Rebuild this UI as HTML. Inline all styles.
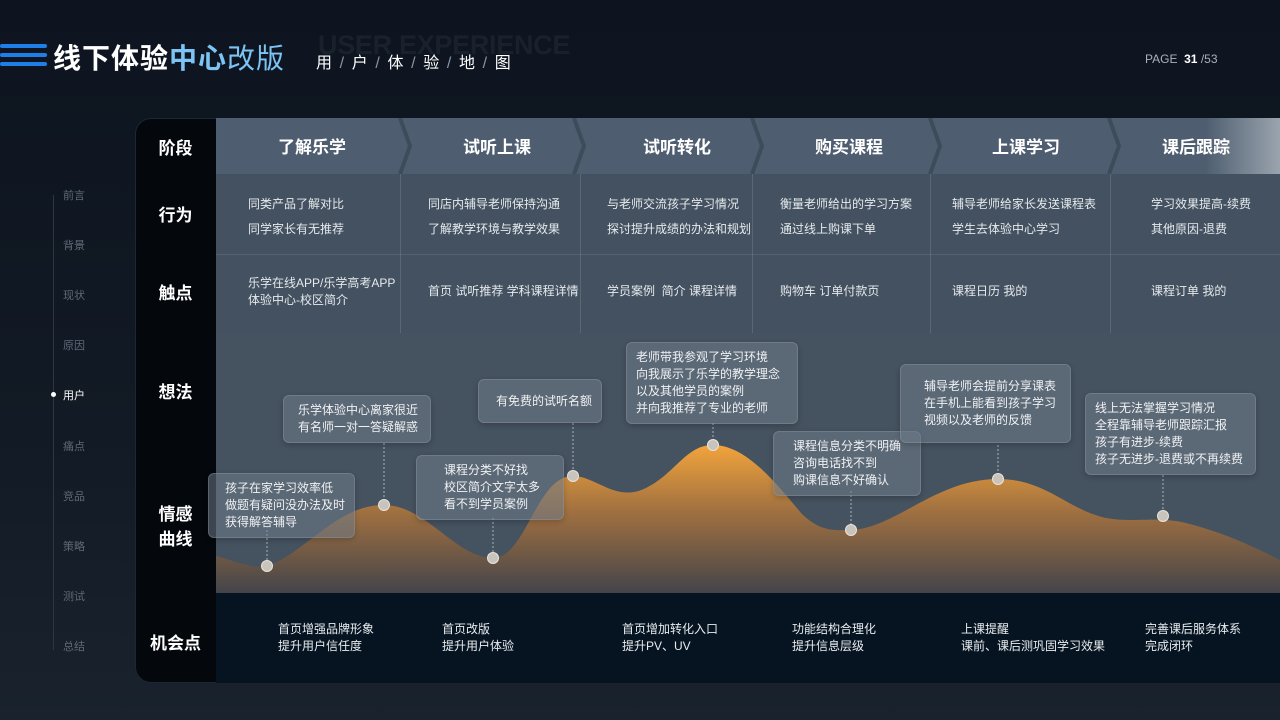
<!DOCTYPE html>
<html><head><meta charset="utf-8"><style>
*{margin:0;padding:0;box-sizing:border-box}
body{width:1280px;height:720px;overflow:hidden;background:linear-gradient(180deg,#0d141f 0%,#121a25 60%,#19222d 100%);font-family:"Liberation Sans","Noto Sans CJK SC",sans-serif;color:#fff;position:relative}
.a{position:absolute}
.t{font-size:12px;line-height:25px;color:#e6eaee;white-space:nowrap}
.lab{font-size:17px;font-weight:bold;color:#fff;text-align:center;width:81px;left:135px}
.bub{position:absolute;background:rgba(110,122,136,.55);border:1px solid rgba(150,160,170,.35);border-radius:6px;font-size:12px;line-height:17px;color:#f0f2f4;padding:6px 14px;white-space:nowrap;box-shadow:0 2px 6px rgba(0,0,0,.2)}
.nav{left:63px;font-size:11px;color:#5f6a76}
.op{font-size:12px;line-height:17px;color:#e8ecef;top:621px}
.vl{position:absolute;width:1px;background:rgba(160,170,180,.25)}
</style></head><body>
<div class="a" style="left:0;top:44px;width:47px;height:4px;background:#1e7fe8;border-radius:2px"></div>
<div class="a" style="left:0;top:53px;width:47px;height:4px;background:#1e7fe8;border-radius:2px"></div>
<div class="a" style="left:0;top:62px;width:47px;height:4px;background:#1e7fe8;border-radius:2px"></div>
<div class="a" style="left:53px;top:37px;font-size:28px;font-weight:bold;white-space:nowrap;letter-spacing:1px">线下体验<span style="color:#7cc4f4">中心</span><span style="color:#7cc4f4;font-weight:normal">改版</span></div>
<div class="a" style="left:318px;top:30px;font-size:27px;font-weight:bold;color:#18212c;white-space:nowrap;letter-spacing:-0.3px">USER EXPERIENCE</div>
<div class="a" style="left:316px;top:49px;font-size:16px;white-space:nowrap;letter-spacing:1.6px">用 <span style="color:#8a95a0">/</span> 户 <span style="color:#8a95a0">/</span> 体 <span style="color:#8a95a0">/</span> 验 <span style="color:#8a95a0">/</span> 地 <span style="color:#8a95a0">/</span> 图</div>
<div class="a" style="left:1145px;top:52px;font-size:12px;color:#a9b1ba;white-space:nowrap">PAGE&nbsp; <b style="color:#fff">31</b> /53</div>

<div class="a" style="left:53px;top:195px;width:1px;height:455px;background:#2c3743"></div>
<div class="a" style="left:51px;top:392px;width:5px;height:5px;border-radius:50%;background:#fff"></div>
<div class="a nav" style="top:187px">前言</div><div class="a nav" style="top:237px">背景</div><div class="a nav" style="top:287px">现状</div><div class="a nav" style="top:337px">原因</div><div class="a nav" style="top:387px;color:#fff">用户</div><div class="a nav" style="top:438px">痛点</div><div class="a nav" style="top:488px">竞品</div><div class="a nav" style="top:538px">策略</div><div class="a nav" style="top:588px">测试</div><div class="a nav" style="top:638px">总结</div>

<div class="a" style="left:135px;top:118px;width:1145px;height:565px;border-radius:16px 0 0 16px;background:#04080d;overflow:hidden;border:1px solid #1a2836;border-right:none"></div>
<div class="a" style="left:216px;top:118px;width:1064px;height:56px;background:linear-gradient(90deg,#4e5e70 0%,#4e5e70 93%,#9aa4ae 100%)"></div>
<svg class="a" style="left:216px;top:118px" width="1064" height="56">
<g fill="none" stroke="#3d4b5a" stroke-width="4">
<polyline points="184,0 194,28 184,56"/><polyline points="358,0 368,28 358,56"/><polyline points="536,0 546,28 536,56"/><polyline points="714,0 724,28 714,56"/><polyline points="893,0 903,28 893,56"/></g></svg>
<div class="a" style="left:216px;top:174px;width:1064px;height:159px;background:#435160"></div>
<div class="a" style="left:216px;top:254px;width:1064px;height:1px;background:#55636f"></div>
<div class="a" style="left:216px;top:333px;width:1064px;height:260px;background:#45525f"></div>
<div class="vl" style="left:400px;top:174px;height:159px"></div><div class="vl" style="left:580px;top:174px;height:159px"></div><div class="vl" style="left:752px;top:174px;height:159px"></div><div class="vl" style="left:930px;top:174px;height:159px"></div><div class="vl" style="left:1110px;top:174px;height:159px"></div>
<div class="a" style="left:216px;top:593px;width:1064px;height:90px;background:#061421"></div>

<div class="a lab" style="top:134px">阶段</div>
<div class="a lab" style="top:201px">行为</div>
<div class="a lab" style="top:279px">触点</div>
<div class="a lab" style="top:378px">想法</div>
<div class="a lab" style="top:502px;line-height:25px">情感<br>曲线</div>
<div class="a lab" style="top:629px">机会点</div>

<div class="a" style="top:133px;left:216px;width:1064px;height:22px;font-size:17px;font-weight:bold">
<span class="a" style="left:62px">了解乐学</span><span class="a" style="left:247px">试听上课</span><span class="a" style="left:427px">试听转化</span><span class="a" style="left:599px">购买课程</span><span class="a" style="left:776px">上课学习</span><span class="a" style="left:946px">课后跟踪</span></div>

<div class="a t" style="left:248px;top:192px">同类产品了解对比<br>同学家长有无推荐</div>
<div class="a t" style="left:428px;top:192px">同店内辅导老师保持沟通<br>了解教学环境与教学效果</div>
<div class="a t" style="left:607px;top:192px">与老师交流孩子学习情况<br>探讨提升成绩的办法和规划</div>
<div class="a t" style="left:780px;top:192px">衡量老师给出的学习方案<br>通过线上购课下单</div>
<div class="a t" style="left:952px;top:192px">辅导老师给家长发送课程表<br>学生去体验中心学习</div>
<div class="a t" style="left:1151px;top:192px">学习效果提高-续费<br>其他原因-退费</div>
<div class="a t" style="left:248px;top:275px;line-height:17px">乐学在线APP/乐学高考APP<br>体验中心-校区简介</div>
<div class="a t" style="left:428px;top:279px">首页 试听推荐 学科课程详情</div>
<div class="a t" style="left:607px;top:279px">学员案例&nbsp; 简介 课程详情</div>
<div class="a t" style="left:780px;top:279px">购物车 订单付款页</div>
<div class="a t" style="left:952px;top:279px">课程日历 我的</div>
<div class="a t" style="left:1151px;top:279px">课程订单 我的</div>

<svg class="a" style="left:216px;top:333px" width="1064" height="260">
<defs><linearGradient id="g" x1="0" y1="0" x2="0" y2="1"><stop offset="0" stop-color="#f2a43c"/><stop offset=".45" stop-color="#a07040"/><stop offset="1" stop-color="#44444a"/></linearGradient></defs>
<path d="M0,223 C20,228 35,236 51,233 C90,220 120,172 168,172 C210,172 240,225 277,225 C310,225 320,143 357,143 C380,143 400,170 430,155 C460,140 470,112 497,112 C530,112 560,150 585,180 C605,200 620,197 635,197 C680,195 720,146 782,146 C830,146 850,176 890,185 C920,190 940,183 970,190 C1010,200 1040,215 1064,227 L1064,260 L0,260Z" fill="url(#g)"/>
<g stroke="#aab2ba" stroke-dasharray="2,2" stroke-width="1">
<line x1="51" y1="193" x2="51" y2="233"/><line x1="168" y1="110" x2="168" y2="172"/><line x1="277" y1="185" x2="277" y2="225"/><line x1="357" y1="90" x2="357" y2="143"/><line x1="497" y1="90" x2="497" y2="112"/><line x1="635" y1="158" x2="635" y2="197"/><line x1="782" y1="112" x2="782" y2="146"/><line x1="947" y1="142" x2="947" y2="183"/></g>
<g fill="#c8c4bc" stroke="#e8e4dc" stroke-width="1"><circle cx="51" cy="233" r="5.5"/><circle cx="168" cy="172" r="5.5"/><circle cx="277" cy="225" r="5.5"/><circle cx="357" cy="143" r="5.5"/><circle cx="497" cy="112" r="5.5"/><circle cx="635" cy="197" r="5.5"/><circle cx="782" cy="146" r="5.5"/><circle cx="947" cy="183" r="5.5"/></g>
</svg>

<div class="bub" style="left:208px;top:473px;width:147px;padding:6px 16px;line-height:17px">孩子在家学习效率低<br>做题有疑问没办法及时<br>获得解答辅导</div>
<div class="bub" style="left:283px;top:395px;width:148px">乐学体验中心离家很近<br>有名师一对一答疑解惑</div>
<div class="bub" style="left:416px;top:455px;width:148px;padding-left:27px">课程分类不好找<br>校区简介文字太多<br>看不到学员案例</div>
<div class="bub" style="left:478px;top:379px;width:124px;height:44px;line-height:30px;padding-left:17px">有免费的试听名额</div>
<div class="bub" style="left:626px;top:342px;width:172px;padding-left:9px">老师带我参观了学习环境<br>向我展示了乐学的教学理念<br>以及其他学员的案例<br>并向我推荐了专业的老师</div>
<div class="bub" style="left:773px;top:431px;width:148px;padding-left:19px">课程信息分类不明确<br>咨询电话找不到<br>购课信息不好确认</div>
<div class="bub" style="left:900px;top:364px;width:171px;padding:13px 23px">辅导老师会提前分享课表<br>在手机上能看到孩子学习<br>视频以及老师的反馈</div>
<div class="bub" style="left:1085px;top:393px;width:171px;padding-left:9px">线上无法掌握学习情况<br>全程靠辅导老师跟踪汇报<br>孩子有进步-续费<br>孩子无进步-退费或不再续费</div>

<div class="a op" style="left:278px">首页增强品牌形象<br>提升用户信任度</div>
<div class="a op" style="left:442px">首页改版<br>提升用户体验</div>
<div class="a op" style="left:622px">首页增加转化入口<br>提升PV、UV</div>
<div class="a op" style="left:792px">功能结构合理化<br>提升信息层级</div>
<div class="a op" style="left:961px">上课提醒<br>课前、课后测巩固学习效果</div>
<div class="a op" style="left:1145px">完善课后服务体系<br>完成闭环</div>
</body></html>
